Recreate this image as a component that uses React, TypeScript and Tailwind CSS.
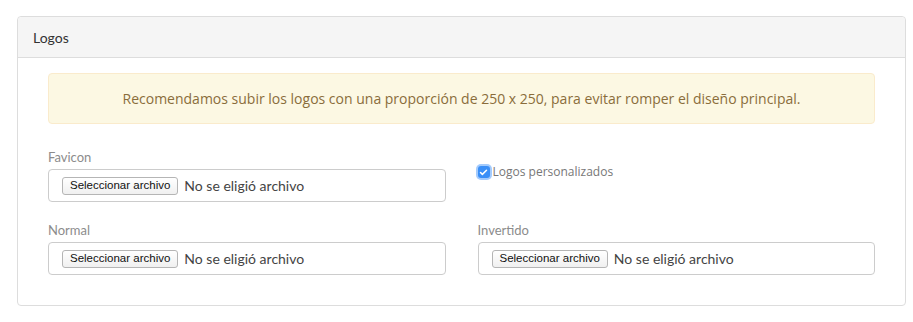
import { Check } from 'lucide-react'

function FileField({ label }: { label: string }) {
  return (
    <div className="flex flex-col">
      <label className="mb-[2px] mt-[3px] h-5 font-['Lato',sans-serif] text-[13px] leading-5 text-[#8c8c8c]">{label}</label>
      <div className="flex h-[33px] items-center rounded-[4px] border border-[#ccc] bg-white px-[13px]">
        <span className="flex h-[18px] items-center rounded-[3px] border border-[#b5b5b5] bg-gradient-to-b from-white to-[#f0f0f0] px-[7px] font-['Liberation_Sans',sans-serif] text-[11.5px] text-[#111]">
          Seleccionar archivo
        </span>
        <span className="ml-[6px] font-['Lato',sans-serif] text-[14px] text-[#444]">No se eligió archivo</span>
      </div>
    </div>
  )
}

export default function App() {
  return (
    <div className="min-h-[322px] bg-white pl-[17px] pr-[7px] pt-4">
      <div className="rounded-[4px] border border-[#ddd] bg-white">
        <div className="flex h-[41px] items-center rounded-t-[4px] border-b border-[#ddd] bg-[#f5f5f5] px-[15px] font-['Lato',sans-serif] text-[14px] text-[#333]">
          Logos
        </div>
        <div className="px-[30px] pb-[30px] pt-[15px]">
          <div className="mb-5 flex h-[51px] items-center justify-center rounded-[4px] border border-[#faebcc] bg-[#fcf8e3] font-['Open_Sans',sans-serif] text-[14px] text-[#8a6d3b]">
            Recomendamos subir los logos con una proporción de 250 x 250, para evitar romper el diseño principal.
          </div>
          <div className="grid grid-cols-2 gap-x-8 gap-y-[15px]">
            <FileField label="Favicon" />
            <div className="flex items-start pt-[19px]">
              <div className="flex items-center">
                <span className="flex h-[12px] w-[12px] items-center justify-center rounded-[3px] bg-[#3a8ff7] shadow-[0_0_0_2px_rgba(90,160,250,0.55)]">
                  <Check className="h-[9px] w-[9px] text-white" strokeWidth={4} />
                </span>
                <span className="ml-[3px] font-['Open_Sans',sans-serif] text-[12px] text-[#777]">Logos personalizados</span>
              </div>
            </div>
            <FileField label="Normal" />
            <FileField label="Invertido" />
          </div>
        </div>
      </div>
    </div>
  )
}
